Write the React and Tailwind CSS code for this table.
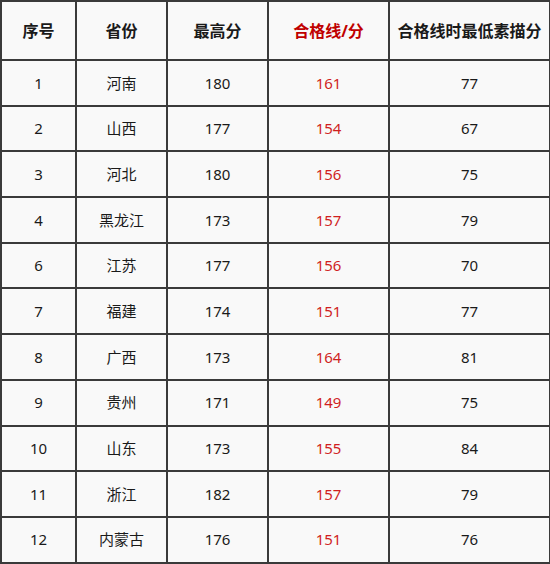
const rows = [
  ["1", "河南", "180", "161", "77"],
  ["2", "山西", "177", "154", "67"],
  ["3", "河北", "180", "156", "75"],
  ["4", "黑龙江", "173", "157", "79"],
  ["6", "江苏", "177", "156", "70"],
  ["7", "福建", "174", "151", "77"],
  ["8", "广西", "173", "164", "81"],
  ["9", "贵州", "171", "149", "75"],
  ["10", "山东", "173", "155", "84"],
  ["11", "浙江", "182", "157", "79"],
  ["12", "内蒙古", "176", "151", "76"],
];

const font = { fontFamily: '"Noto Sans", "Noto Sans CJK SC", sans-serif' };

export default function App() {
  return (
    <div className="w-[550px] h-[564px] bg-white" style={font}>
      <table className="table-fixed border-collapse w-[549px] bg-[#f9f9f9] text-[#1a1a1a]">
        <colgroup>
          <col className="w-[75px]" />
          <col className="w-[91px]" />
          <col className="w-[101px]" />
          <col className="w-[121px]" />
          <col className="w-[161px]" />
        </colgroup>
        <thead>
          <tr className="h-[59px] text-[16px] font-bold">
            <th className="border-2 border-[#3a3a3a] text-center">序号</th>
            <th className="border-2 border-[#3a3a3a] text-center">省份</th>
            <th className="border-2 border-[#3a3a3a] text-center">最高分</th>
            <th className="border-2 border-[#3a3a3a] text-center text-[#c00000]">合格线/分</th>
            <th className="border-2 border-[#3a3a3a] text-center whitespace-nowrap">合格线时最低素描分</th>
          </tr>
        </thead>
        <tbody>
          {rows.map((r) => (
            <tr key={r[0]} className="h-[45.7px] text-[15px]">
              <td className="border-2 border-[#3a3a3a] text-center">{r[0]}</td>
              <td className="border-2 border-[#3a3a3a] text-center">{r[1]}</td>
              <td className="border-2 border-[#3a3a3a] text-center">{r[2]}</td>
              <td className="border-2 border-[#3a3a3a] text-center text-[#d01f1f]">{r[3]}</td>
              <td className="border-2 border-[#3a3a3a] text-center">{r[4]}</td>
            </tr>
          ))}
        </tbody>
      </table>
    </div>
  );
}
